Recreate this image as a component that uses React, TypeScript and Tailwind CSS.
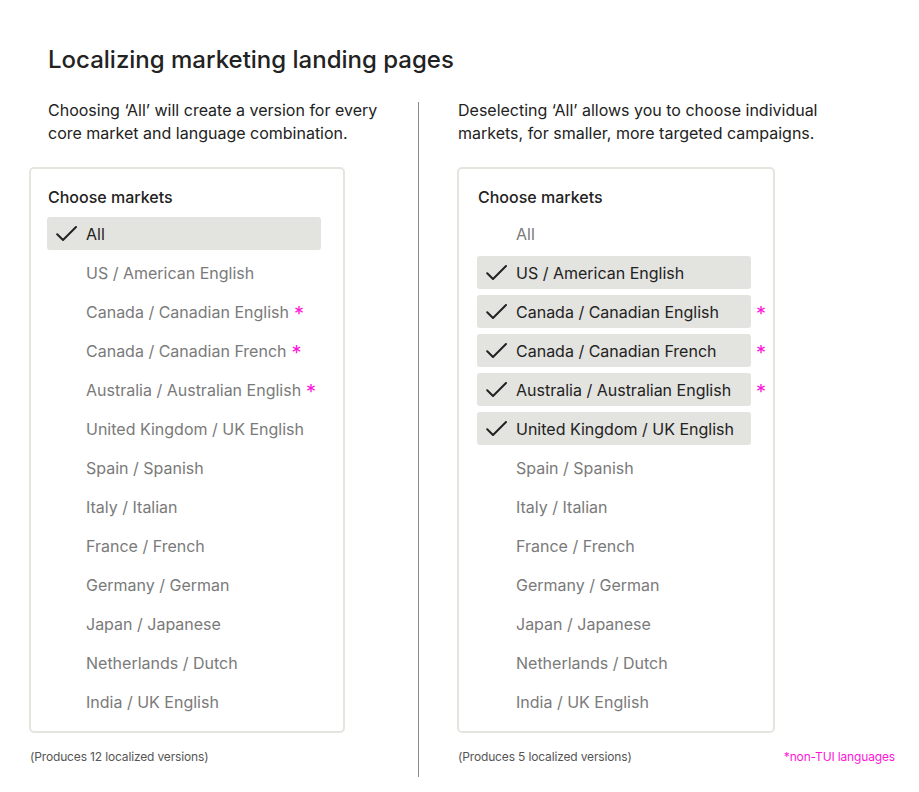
import React from "react";

const markets = [
  { name: "US / American English", star: false },
  { name: "Canada / Canadian English", star: true },
  { name: "Canada / Canadian French", star: true },
  { name: "Australia / Australian English", star: true },
  { name: "United Kingdom / UK English", star: false },
  { name: "Spain / Spanish", star: false },
  { name: "Italy / Italian", star: false },
  { name: "France / French", star: false },
  { name: "Germany / German", star: false },
  { name: "Japan / Japanese", star: false },
  { name: "Netherlands / Dutch", star: false },
  { name: "India / UK English", star: false },
];

function Check() {
  return (
    <svg width="21" height="16" viewBox="0 0 21 16" fill="none" className="shrink-0">
      <path d="M1.2 8.2 L7 14 L20 1" stroke="#222" strokeWidth="2" strokeLinecap="round" strokeLinejoin="round" />
    </svg>
  );
}

function Row({ label, selected, star, starOutside }: { label: string; selected: boolean; star: boolean; starOutside: boolean }) {
  return (
    <div className="flex items-center h-[33px]">
      <div
        className={
          "flex items-center h-[33px] w-[274px] rounded-[3px] pl-[9px] " +
          (selected ? "bg-[#e3e3df] text-[#222222]" : "text-[#7a7a7a]")
        }
      >
        {selected ? <Check /> : <span className="w-[21px] shrink-0" />}
        <span className="ml-[9px] whitespace-nowrap">{label}</span>
        {star && !starOutside && <span className="ml-[5px] text-[#ff14d8] text-[20px] leading-none mt-[4px]">*</span>}
      </div>
      {star && starOutside && <span className="ml-[5px] text-[#ff14d8] text-[20px] leading-none mt-[4px]">*</span>}
    </div>
  );
}

function Card({ allSelected, selectedSet, starOutside, padClass }: { allSelected: boolean; selectedSet: Set<string>; starOutside: boolean; padClass: string }) {
  return (
    <div className={"border-2 border-[#e5e5e0] rounded-[5px] pt-[16px] pb-[13px] w-full " + padClass}>
      <div className="font-medium text-[16px] leading-[24px] text-[#222] pl-[1px]">Choose markets</div>
      <div className="mt-[8px] flex flex-col gap-[6px]">
        <Row label="All" selected={allSelected} star={false} starOutside={starOutside} />
        {markets.map((m) => (
          <Row key={m.name} label={m.name} selected={selectedSet.has(m.name)} star={m.star} starOutside={starOutside} />
        ))}
      </div>
    </div>
  );
}

export default function App() {
  const rightSel = new Set([
    "US / American English",
    "Canada / Canadian English",
    "Canada / Canadian French",
    "Australia / Australian English",
    "United Kingdom / UK English",
  ]);
  return (
    <div
      className="w-[919px] h-[792px] bg-white text-[#222] pt-[44px]"
      style={{ fontFamily: "Inter, 'Open Sans', sans-serif" }}
    >
      <h1 className="ml-[48px] text-[24px] leading-[32px] font-medium">Localizing marketing landing pages</h1>
      <div className="flex mt-[23px] pb-[15px]">
        <div className="w-[389px] ml-[29px] flex flex-col">
          <p className="ml-[19px] text-[16px] leading-[23px]">
            Choosing ‘All’ will create a version for every
            <br />
            core market and language combination.
          </p>
          <div className="mt-[22px] w-[316px]">
            <Card allSelected={true} selectedSet={new Set()} starOutside={false} padClass="pl-[16px]" />
          </div>
          <p className="mt-[16px] ml-[1px] text-[12px] leading-[16px] tracking-[-0.15px] text-[#555] pb-[12px]">(Produces 12 localized versions)</p>
        </div>
        <div className="w-px bg-[#8a8a8a] mt-[3px]" />
        <div className="ml-[38px] flex flex-col">
          <p className="ml-[1px] text-[16px] leading-[23px]">
            Deselecting ‘All’ allows you to choose individual
            <br />
            markets, for smaller, more targeted campaigns.
          </p>
          <div className="mt-[22px] w-[318px]">
            <Card allSelected={false} selectedSet={rightSel} starOutside={true} padClass="pl-[18px]" />
          </div>
          <div className="mt-[16px] flex w-[438px] text-[12px] leading-[16px] tracking-[-0.15px]">
            <p className="ml-[1px] text-[#555]">(Produces 5 localized versions)</p>
            <p className="ml-auto text-[#ff14d8]">*non-TUI languages</p>
          </div>
        </div>
      </div>
    </div>
  );
}
